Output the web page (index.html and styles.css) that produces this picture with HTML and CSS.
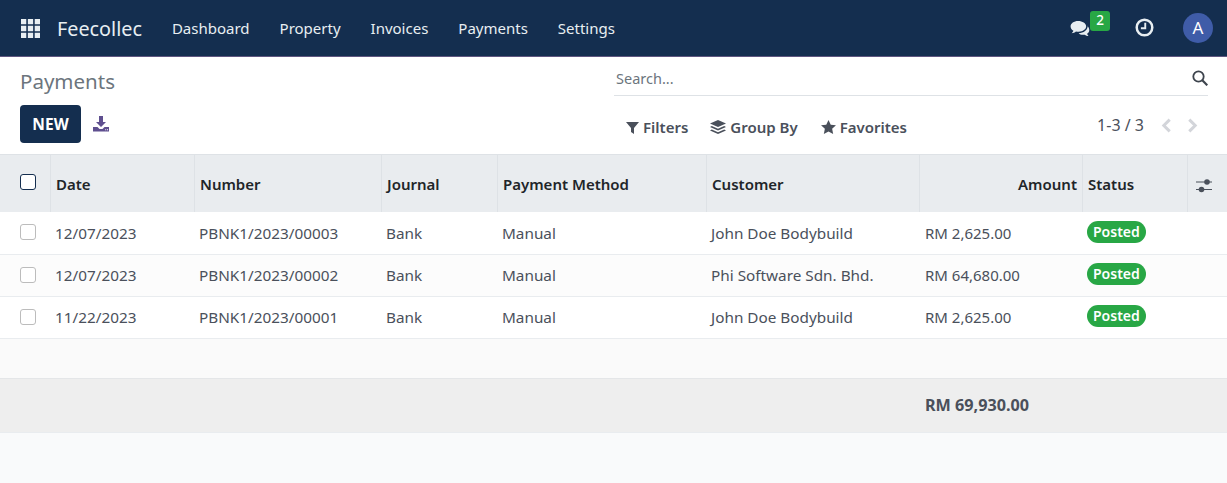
FILE: index.html
```html
<!DOCTYPE html>
<html lang="en">
<head>
    <meta charset="UTF-8">
    <meta name="viewport" content="width=device-width, initial-scale=1.0">
    <title>Payments</title>
    <link rel="stylesheet" href="styles.css">
</head>
<body>

    <!-- Top navigation -->
    <nav class="navbar">
        <svg class="apps-icon" viewBox="0 0 18 18" width="19" height="19">
            <path fill="#e8eef2" d="M0 0h5v5H0zM6.500 0h5v5h-5zM13 0h5v5h-5zM0 6.500h5v5H0zM6.500 6.500h5v5h-5zM13 6.500h5v5h-5zM0 13h5v5H0zM6.500 13h5v5h-5zM13 13h5v5h-5z"/>
        </svg>
        <span class="brand">Feecollec</span>
        <a class="nav-link">Dashboard</a>
        <a class="nav-link">Property</a>
        <a class="nav-link">Invoices</a>
        <a class="nav-link">Payments</a>
        <a class="nav-link">Settings</a>
        <div class="nav-right">
            <div class="messages">
                <svg viewBox="0 0 22 18" width="21" height="17">
                    <path fill="#e8eef2" d="M8.500 1C4 1 .5 3.500.5 6.800c0 1.900 1.200 3.500 3 4.600-.3 1-1 1.900-1.800 2.600 1.700-.2 3.300-.8 4.500-1.800.9.200 1.800.300 2.800.3 4.500 0 8-2.600 8-5.800C17 3.500 13 1 8.500 1z"/>
                    <path fill="#e8eef2" d="M18.200 5.500c.2.500.3 1 .3 1.500 0 3.800-4 6.800-9.500 7 1 1 2.700 1.700 4.500 1.700.7 0 1.400-.1 2-.2 1 .9 2.500 1.400 4 1.500-.7-.7-1.200-1.500-1.500-2.400 1.400-.9 2.300-2.300 2.300-3.800 0-2-.9-3.600-2.100-4.800z"/>
                </svg>
                <span class="badge-count">2</span>
            </div>
            <svg class="clock" viewBox="0 0 20 20" width="19" height="19">
                <circle cx="10" cy="10" r="8.200" fill="none" stroke="#e8eef2" stroke-width="2.600"/>
                <path fill="none" stroke="#e8eef2" stroke-width="2" d="M10.800 5v5.800H6.200"/>
            </svg>
            <span class="avatar">A</span>
        </div>
    </nav>

    <!-- Title, search and pager -->
    <header class="control-panel">
        <div class="cp-left">
            <h1 class="page-title">Payments</h1>
            <div class="cp-buttons">
                <button class="btn-new">NEW</button>
                <svg viewBox="0 0 16 16" width="16" height="16">
                    <path fill="#5f4f8f" d="M6 0h4v6h3l-5 5-5-5h3z"/>
                    <path fill="#5f4f8f" d="M0 11h4.500l2 2h3l2-2H16v4.500H0z"/>
                    <path fill="#fff" d="M12.200 13.200h1v1h-1zM14 13.200h1v1h-1z"/>
                </svg>
            </div>
        </div>
        <div class="cp-right">
            <div class="search-bar">
                <span class="search-text">Search...</span>
                <svg viewBox="0 0 16 16" width="16" height="16">
                    <circle cx="6.500" cy="6.500" r="5.200" fill="none" stroke="#3d444d" stroke-width="1.800"/>
                    <path stroke="#3d444d" stroke-width="2.200" d="M10.300 10.300l5 5"/>
                </svg>
            </div>
            <div class="cp-tools">
                <div class="search-options">
                    <span class="option">
                        <svg viewBox="0 0 13 13" width="13" height="13"><path fill="#4a505b" d="M0 1h13L8 7v6L5 11V7z"/></svg>
                        Filters
                    </span>
                    <span class="option">
                        <svg viewBox="0 0 16 15" width="16" height="15">
                            <path fill="#4a505b" d="M8 0l8 3.500L8 7 0 3.500z"/>
                            <path fill="#4a505b" d="M1.800 6L8 8.700 14.200 6 16 7 8 10.500 0 7zM1.800 9.500L8 12.200l6.200-2.700L16 10.500 8 14 0 10.500z"/>
                        </svg>
                        Group By
                    </span>
                    <span class="option">
                        <svg viewBox="0 0 16 15" width="15" height="14"><path fill="#4a505b" d="M8 0l2.400 5 5.600.7-4.100 3.800 1.100 5.500-5-2.800-5 2.800 1.100-5.500L0 5.700 5.600 5z"/></svg>
                        Favorites
                    </span>
                </div>
                <div class="pager">
                    <span class="pager-value">1-3 / 3</span>
                    <svg viewBox="0 0 10 14" width="11" height="15"><path fill="none" stroke="#d3d5da" stroke-width="2.800" d="M8 1.500L2.500 7 8 12.500"/></svg>
                    <svg viewBox="0 0 10 14" width="11" height="15"><path fill="none" stroke="#d3d5da" stroke-width="2.800" d="M2 1.500L7.500 7 2 12.500"/></svg>
                </div>
            </div>
        </div>
    </header>

    <!-- Payments list -->
    <table class="list-table">
        <colgroup>
            <col class="col-check">
            <col class="col-date">
            <col class="col-number">
            <col class="col-journal">
            <col class="col-method">
            <col class="col-customer">
            <col class="col-amount">
            <col class="col-status">
            <col class="col-opt">
        </colgroup>
        <thead>
            <tr>
                <th><span class="check check-head"></span></th>
                <th>Date</th>
                <th>Number</th>
                <th>Journal</th>
                <th>Payment Method</th>
                <th>Customer</th>
                <th class="text-right">Amount</th>
                <th>Status</th>
                <th>
                    <svg class="sliders" viewBox="0 0 16 14" width="16" height="14">
                        <path stroke="#4a505b" stroke-width="1.200" d="M0 3h16M0 10.500h16"/>
                        <circle cx="11" cy="3" r="2.800" fill="#4a505b"/>
                        <circle cx="5.500" cy="10.500" r="2.800" fill="#4a505b"/>
                    </svg>
                </th>
            </tr>
        </thead>
        <tbody>
            <tr>
                <td><span class="check"></span></td>
                <td>12/07/2023</td>
                <td>PBNK1/2023/00003</td>
                <td>Bank</td>
                <td>Manual</td>
                <td>John Doe Bodybuild</td>
                <td class="amount">RM 2,625.00</td>
                <td><span class="badge-status">Posted</span></td>
                <td></td>
            </tr>
            <tr>
                <td><span class="check"></span></td>
                <td>12/07/2023</td>
                <td>PBNK1/2023/00002</td>
                <td>Bank</td>
                <td>Manual</td>
                <td>Phi Software Sdn. Bhd.</td>
                <td class="amount">RM 64,680.00</td>
                <td><span class="badge-status">Posted</span></td>
                <td></td>
            </tr>
            <tr>
                <td><span class="check"></span></td>
                <td>11/22/2023</td>
                <td>PBNK1/2023/00001</td>
                <td>Bank</td>
                <td>Manual</td>
                <td>John Doe Bodybuild</td>
                <td class="amount">RM 2,625.00</td>
                <td><span class="badge-status">Posted</span></td>
                <td></td>
            </tr>
            <tr class="empty-row">
                <td colspan="9"></td>
            </tr>
        </tbody>
        <tfoot>
            <tr>
                <td colspan="6"></td>
                <td class="amount total">RM 69,930.00</td>
                <td colspan="2"></td>
            </tr>
        </tfoot>
    </table>

</body>
</html>
```

FILE: styles.css
```css
/* Basic styling for the page */
html, body {
    height: 100%;
}
body {
    font-family: "Noto Sans", Arial, sans-serif;
    font-size: 15.3px;
    margin: 0;
    color: #4a505b;
    background-color: #f9fafb;
    overflow: hidden;
}

/* Navbar */
.navbar {
    display: flex;
    align-items: center;
    height: 56px;
    padding-left: 21px;
    background-color: #142e4f;
    border-bottom: 1px solid #5f5680;
    color: #e8eef2;
}
.apps-icon {
    margin-right: 17px;
}
.brand {
    font-size: 19.800px;
    margin-right: 30px;
}
.nav-link {
    font-size: 15px;
    margin-right: 30px;
}
.nav-right {
    display: flex;
    align-items: center;
    margin-left: auto;
    padding-right: 14px;
}
.messages {
    position: relative;
    display: flex;
    margin-right: 44px;
}
.badge-count {
    position: absolute;
    top: -9px;
    left: 20px;
    width: 20px;
    height: 20px;
    line-height: 19px;
    text-align: center;
    font-size: 13.500px;
    font-weight: 500;
    color: #fff;
    background-color: #28a745;
    border-radius: 3px;
}
.clock {
    margin: -2px 29px 0 0;
}
.avatar {
    width: 30px;
    height: 30px;
    line-height: 30px;
    text-align: center;
    font-size: 17px;
    color: #fff;
    background-color: #3f5ca8;
    border-radius: 50%;
}

/* Control panel */
.control-panel {
    display: flex;
    justify-content: space-between;
    height: 97px;
    padding: 0 19px 0 20px;
    background-color: #fff;
    box-sizing: border-box;
}
.page-title {
    margin: 10px 0 9px;
    font-size: 20.500px;
    line-height: 29px;
    font-weight: 400;
    color: #6c757d;
}
.cp-buttons {
    display: flex;
    align-items: center;
    gap: 12px;
}
.btn-new {
    height: 38px;
    width: 61px;
    padding: 0;
    font-family: inherit;
    font-size: 15.500px;
    font-weight: 700;
    color: #fff;
    background-color: #142e4f;
    border: none;
    border-radius: 4px;
}
.cp-right {
    width: 594px;
}
.search-bar {
    display: flex;
    align-items: center;
    justify-content: space-between;
    height: 35px;
    margin-bottom: 16px;
    padding: 3px 0 0 2px;
    border-bottom: 1px solid #dee2e6;
}
.search-text {
    font-size: 14.500px;
    color: #6c757d;
}
.cp-tools {
    display: flex;
    align-items: center;
    justify-content: space-between;
    height: 30px;
}
.search-options {
    display: flex;
    gap: 22px;
    padding-left: 12px;
    font-size: 15px;
    font-weight: 600;
}
.option {
    display: flex;
    align-items: center;
    gap: 4px;
}
.option:last-child {
    margin-left: 1px;
}
.pager {
    display: flex;
    align-items: center;
    gap: 15px;
    padding: 0 10px 4px 0;
    font-size: 16px;
}
.pager-value {
    margin-right: 2px;
}

/* List table */
.list-table {
    width: 1227px;
    table-layout: fixed;
    border-collapse: separate;
    border-spacing: 0;
}
.col-check { width: 50px; }
.col-date { width: 144px; }
.col-number { width: 187px; }
.col-journal { width: 116px; }
.col-method { width: 209px; }
.col-customer { width: 213px; }
.col-amount { width: 163px; }
.col-status { width: 105px; }
.col-opt { width: 40px; }

th {
    height: 58px;
    padding: 1px 5px 0;
    text-align: left;
    font-size: 15px;
    font-weight: 600;
    color: #212529;
    background-color: #e9ecef;
    border-top: 1px solid #dee2e6;
    border-left: 1px solid #dee2e6;
    box-sizing: border-box;
}
th:first-child {
    border-left: none;
}
th.text-right {
    text-align: right;
}
td {
    height: 42px;
    padding: 0 5px 1px;
    background-color: #fff;
    border-bottom: 1px solid #e9ecef;
    box-sizing: border-box;
}
tbody tr:first-child td {
    height: 43px;
    padding-bottom: 0;
}
tbody tr:nth-child(even) td {
    background-color: #fcfcfc;
}
.empty-row td,
tbody tr.empty-row:nth-child(even) td {
    height: 39px;
    background-color: #fafafa;
    border-bottom: none;
}
tfoot td {
    height: 55px;
    background-color: #eee;
    border-top: 1px solid #e4e6e8;
    border-bottom: 1px solid #e9ecef;
}
td.amount {
    font-size: 15px;
    padding-left: 6px;
}
td.total {
    font-size: 16.200px;
    font-weight: 700;
}
th:first-child, td:first-child {
    padding-left: 20px;
}
th:last-child {
    padding-left: 8px;
}
.sliders {
    display: block;
    margin-top: 4px;
}
.check {
    display: block;
    width: 14px;
    height: 14px;
    background-color: #fff;
    border: 1px solid #bcbcbc;
    border-radius: 3px;
}
tbody tr:first-child .check {
    margin-bottom: 2px;
}
.check-head {
    border-color: #142e4f;
    margin: -5px 0 0;
}
.badge-status {
    display: inline-block;
    position: relative;
    top: -1px;
    padding: 0 6px;
    height: 22px;
    line-height: 21px;
    font-size: 14px;
    font-weight: 600;
    color: #fff;
    background-color: #28a745;
    border-radius: 11px;
}
```
